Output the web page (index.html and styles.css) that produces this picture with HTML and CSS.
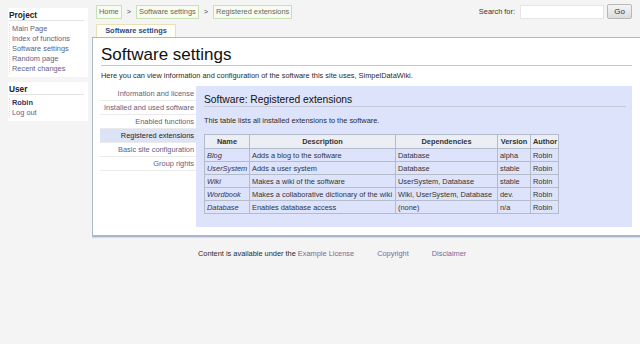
FILE: index.html
```html
<!DOCTYPE html>
<html>
<head>
<meta charset="utf-8">
<link rel="stylesheet" href="styles.css">
</head>
<body>
<div class="page">
  <aside class="sidebar">
    <div class="box">
      <div class="box-title">Project</div>
      <ul class="links">
        <li><a>Main Page</a></li>
        <li><a>Index of functions</a></li>
        <li><a>Software settings</a></li>
        <li><a>Random page</a></li>
        <li><a>Recent changes</a></li>
      </ul>
    </div>
    <div class="box">
      <div class="box-title">User</div>
      <ul class="links">
        <li><a class="strong">Robin</a></li>
        <li><a>Log out</a></li>
      </ul>
    </div>
  </aside>
  <div class="main">
    <div class="topbar">
      <nav class="crumbs">
        <a class="crumb">Home</a><span class="sep">&gt;</span>
        <a class="crumb">Software settings</a><span class="sep">&gt;</span>
        <a class="crumb">Registered extensions</a>
      </nav>
      <form class="search">
        <label>Search for:</label>
        <input type="text" class="search-input">
        <button type="button" class="go">Go</button>
      </form>
    </div>
    <div class="tabs"><span class="tab">Software settings</span></div>
    <div class="content">
      <h1>Software settings</h1>
      <p class="intro">Here you can view information and configuration of the software this site uses, SimpelDataWiki.</p>
      <div class="settings">
        <ul class="subnav">
          <li><a>Information and license</a></li>
          <li><a>Installed and used software</a></li>
          <li><a>Enabled functions</a></li>
          <li class="active"><a>Registered extensions</a></li>
          <li><a>Basic site configuration</a></li>
          <li><a>Group rights</a></li>
        </ul>
        <div class="panel">
          <h2>Software: Registered extensions</h2>
          <p class="panel-text">This table lists all installed extensions to the software.</p>
          <table class="ext">
            <thead>
              <tr><th class="c-name">Name</th><th class="c-desc">Description</th><th class="c-deps">Dependencies</th><th class="c-ver">Version</th><th class="c-auth">Author</th></tr>
            </thead>
            <tbody>
              <tr><td class="nm">Blog</td><td>Adds a blog to the software</td><td>Database</td><td>alpha</td><td>Robin</td></tr>
              <tr><td class="nm">UserSystem</td><td>Adds a user system</td><td>Database</td><td>stable</td><td>Robin</td></tr>
              <tr><td class="nm">Wiki</td><td>Makes a wiki of the software</td><td>UserSystem, Database</td><td>stable</td><td>Robin</td></tr>
              <tr><td class="nm">Wordbook</td><td>Makes a collaborative dictionary of the wiki</td><td>Wiki, UserSystem, Database</td><td>dev.</td><td>Robin</td></tr>
              <tr><td class="nm">Database</td><td>Enables database access</td><td>(none)</td><td>n/a</td><td>Robin</td></tr>
            </tbody>
          </table>
        </div>
      </div>
    </div>
  </div>
</div>
<footer class="footer">
  <span>Content is available under the <a>Example License</a></span>
  <a>Copyright</a>
  <a>Disclaimer</a>
</footer>
</body>
</html>
```
FILE: styles.css
```css
html, body {
  margin: 0;
  padding: 0;
  background: #f4f4f4;
  font-family: "Liberation Sans", Arial, sans-serif;
  font-size: 7.4px;
  color: #2a2a2a;
  width: 640px;
  height: 344px;
  overflow: hidden;
}
a { color: #5e5e86; text-decoration: none; }
ul { list-style: none; margin: 0; padding: 0; }

.page {
  display: flex;
  align-items: flex-start;
}

/* sidebar */
.sidebar {
  width: 80px;
  margin: 8px 4px 0 8px;
  display: flex;
  flex-direction: column;
  gap: 5px;
}
.box {
  background: #fff;
  padding: 2px 0 3px 1px;
}
.box-title {
  font-weight: bold;
  font-size: 8.3px;
  line-height: 10px;
  color: #222;
  border-bottom: 1px solid #e2e2e2;
  margin-right: 4px;
}
.links {
  margin: 3px 0 0 0;
  padding-left: 2px;
  border-left: 1px dotted #dde;
}
.links li { line-height: 10px; }
.links .strong { font-weight: bold; color: #333366; }

/* main */
.main {
  flex: 1;
  display: flex;
  flex-direction: column;
}
.topbar {
  display: flex;
  justify-content: space-between;
  align-items: center;
  height: 15px;
  margin-top: 4px;
  padding: 0 8px 0 4px;
}
.crumbs { display: flex; align-items: center; }
.crumb {
  border: 1px solid #c9dfb4;
  background: #f8fbf2;
  color: #5b6b5b;
  padding: 1px 2px;
  line-height: 10px;
}
.sep { margin: 0 5px; color: #444; }
.search { display: flex; align-items: center; margin: 0; }
.search label { margin-right: 5px; color: #333; }
.search-input {
  width: 84px;
  height: 14px;
  box-sizing: border-box;
  border: 1px solid #e4e4e4;
  background: #fff;
  margin: 0 3px 0 0;
  padding: 0;
}
.go {
  width: 25px;
  height: 15px;
  box-sizing: border-box;
  border: 1px solid #b8b8b8;
  background: linear-gradient(#f4f4f4, #dcdcdc);
  font-family: "Liberation Sans", Arial, sans-serif;
  font-size: 8px;
  color: #333;
  padding: 0;
  border-radius: 2px;
}

.tabs {
  display: flex;
  margin-top: 5px;
  padding-left: 4px;
}
.tab {
  display: block;
  border: 1px solid #eadfb8;
  border-bottom: none;
  background: #fffff8;
  color: #2a4a88;
  font-weight: bold;
  width: 78px;
  height: 12px;
  line-height: 12px;
  text-align: center;
}

.content {
  background: #fff;
  border-top: 1px solid #a9b8cc;
  border-left: 1px solid #a9b8cc;
  border-bottom: 2px solid #a9b8cc;
  box-shadow: 0 1px 0 #d4dbe5;
  padding: 6px 8px 8px 8px;
}
h1 {
  margin: 0;
  font-weight: normal;
  font-size: 17px;
  line-height: 21px;
  color: #111;
  border-bottom: 1px solid #c8c8c8;
}
.intro { margin: 5px 0 6px 0; line-height: 9px; }

.settings {
  display: flex;
  align-items: flex-start;
}
.subnav {
  width: 96px;
  margin: 1px 0 0 -1px;
}
.subnav li {
  text-align: right;
  line-height: 13px;
  border-bottom: 1px solid #eaeaea;
  padding-right: 2px;
}
.subnav li a { color: #606080; }
.subnav li.active { background: #dde3f7; }
.subnav li.active a { color: #222; }

.panel {
  flex: 1;
  background: #dde3fa;
  padding: 7px 6px 13px 8px;
}
h2 {
  margin: 0;
  font-weight: normal;
  font-size: 10.3px;
  line-height: 13px;
  color: #111;
  border-bottom: 1px solid #c4c9d8;
}
.panel-text { margin: 9px 0 9px 0; line-height: 9px; }

.ext {
  border-collapse: collapse;
  border: 1px solid #b4bccc;
  table-layout: fixed;
  width: 355px;
}
.ext th, .ext td {
  border: 1px solid #b4bccc;
  padding: 0 2px;
  height: 12px;
  text-align: left;
  white-space: nowrap;
  overflow: hidden;
}
.ext th {
  background: #eceef6;
  text-align: center;
  height: 13px;
  font-weight: bold;
  color: #333;
}
.c-name { width: 40px; }
.c-desc { width: 141px; }
.c-deps { width: 97px; }
.c-ver { width: 28px; }
.c-auth { width: 23px; }
.ext td { color: #333; }
.ext td.nm { font-style: italic; color: #333355; }

.footer {
  margin-top: 12px;
  padding-left: 198px;
  display: flex;
  gap: 23px;
}
.footer a { color: #7a6a9a; }
```
